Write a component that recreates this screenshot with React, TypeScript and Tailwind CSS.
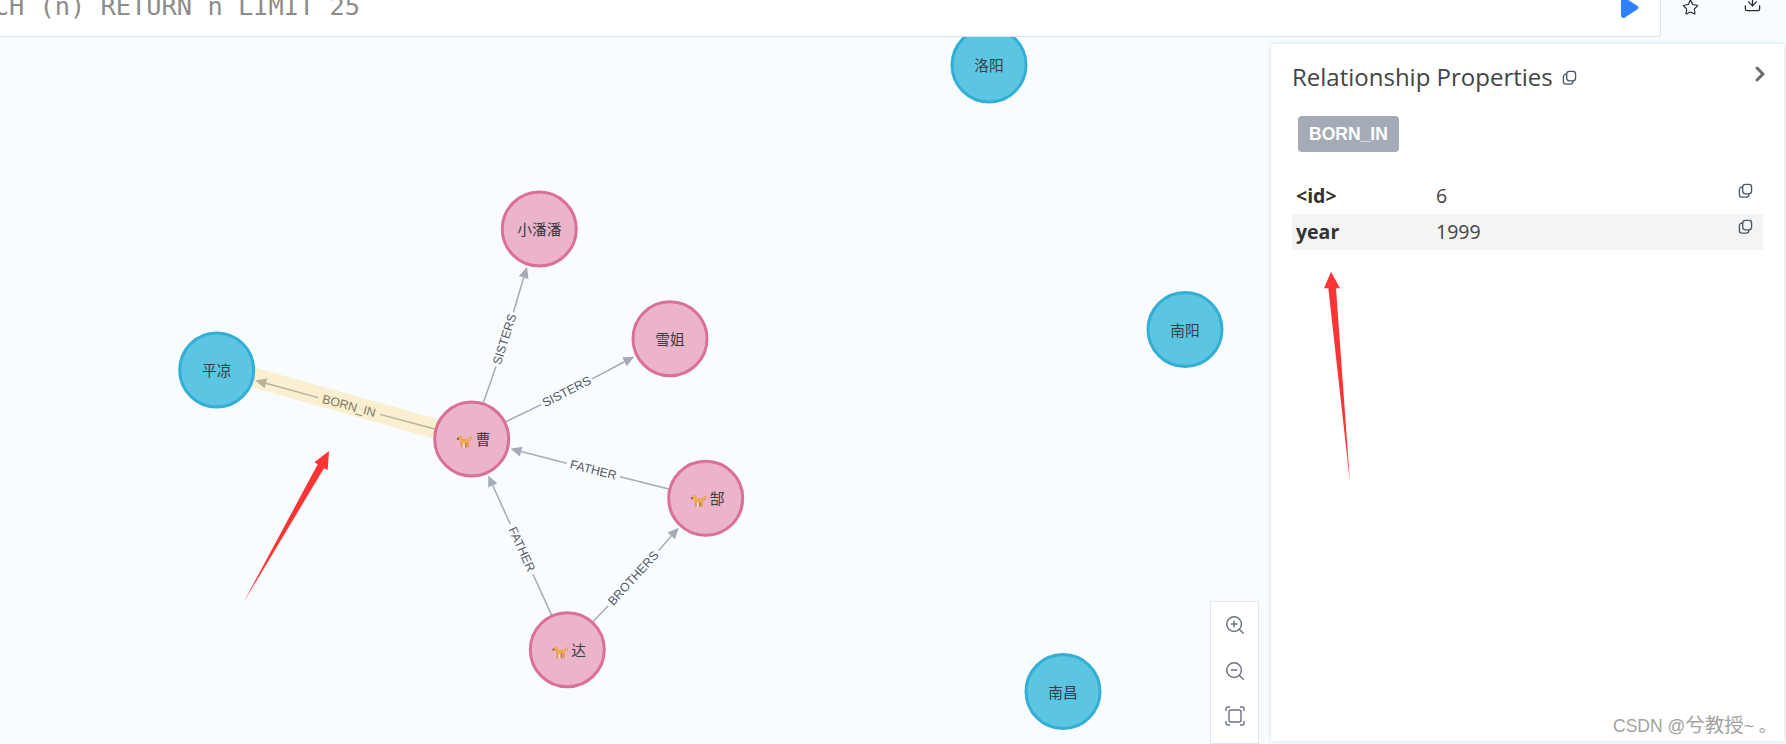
import { Download, Star, ChevronRight, ZoomIn, ZoomOut } from "lucide-react";

type GraphNode = { id: string; x: number; y: number; kind: "pink" | "blue"; text: string; dog?: boolean };

const nodes: GraphNode[] = [
  { id: "cao", x: 471.7, y: 439, kind: "pink", text: "曹", dog: true },
  { id: "pingliang", x: 216.7, y: 370, kind: "blue", text: "平凉" },
  { id: "xiaopan", x: 539.3, y: 229, kind: "pink", text: "小潘潘" },
  { id: "xuejie", x: 670, y: 338.7, kind: "pink", text: "雪姐" },
  { id: "gao", x: 705.7, y: 498.3, kind: "pink", text: "郜", dog: true },
  { id: "da", x: 567.3, y: 649.7, kind: "pink", text: "达", dog: true },
  { id: "luoyang", x: 989, y: 65, kind: "blue", text: "洛阳" },
  { id: "nanyang", x: 1185, y: 329.5, kind: "blue", text: "南阳" },
  { id: "nanchang", x: 1063, y: 691.5, kind: "blue", text: "南昌" },
];

const edges = [
  { from: "cao", to: "xiaopan", label: "SISTERS", lx: 504.7, ly: 339.3, gap: 57 },
  { from: "cao", to: "xuejie", label: "SISTERS", lx: 566.7, ly: 391.7, gap: 57 },
  { from: "cao", to: "pingliang", label: "BORN_IN", lx: 349, ly: 406, gap: 64, selected: true },
  { from: "gao", to: "cao", label: "FATHER", lx: 593.3, ly: 470, gap: 55 },
  { from: "da", to: "cao", label: "FATHER", lx: 521.7, ly: 549.3, gap: 55 },
  { from: "da", to: "gao", label: "BROTHERS", lx: 633.3, ly: 578.3, gap: 75 },
];

function find(id: string) {
  return nodes.find((n) => n.id === id)!;
}

function Edge({ from, to, label, lx, ly, gap, selected }: (typeof edges)[number] & { selected?: boolean }) {
  const a = find(from);
  const b = find(to);
  const len = Math.hypot(b.x - a.x, b.y - a.y);
  const ux = (b.x - a.x) / len;
  const uy = (b.y - a.y) / len;
  const sx = a.x + ux * 38;
  const sy = a.y + uy * 38;
  const tx = b.x - ux * 40;
  const ty = b.y - uy * 40;
  const bx = tx - ux * 11;
  const by = ty - uy * 11;
  const px = -uy * 5;
  const py = ux * 5;
  let angle = (Math.atan2(uy, ux) * 180) / Math.PI;
  if (angle > 90) angle -= 180;
  if (angle < -90) angle += 180;
  const color = selected ? "#b8b29c" : "#a5abb6";

  return (
    <g>
      <line x1={sx} y1={sy} x2={lx - (ux * gap) / 2} y2={ly - (uy * gap) / 2} stroke={color} strokeWidth={1.5} />
      <line x1={lx + (ux * gap) / 2} y1={ly + (uy * gap) / 2} x2={bx} y2={by} stroke={color} strokeWidth={1.5} />
      <polygon points={`${tx},${ty} ${bx + px},${by + py} ${bx - px},${by - py}`} fill={color} />
      <text
        x={lx}
        y={ly}
        textAnchor="middle"
        dominantBaseline="central"
        transform={`rotate(${angle} ${lx} ${ly})`}
        className={`font-['Liberation_Sans',sans-serif] text-[12.3px] ${selected ? "fill-[#7d7660]" : "fill-[#55585f]"}`}
      >
        {label}
      </text>
    </g>
  );
}

// orange dog in front of the person names
function Dog({ x, y }: { x: number; y: number }) {
  return (
    <g transform={`translate(${x} ${y})`}>
      <path d="M11.500 4.500c1.200 0 1.500-2.500 2.700-2.500 1 0 1.300 1.700.3 2.700-.6.6-1.500 1-2.500 1.300" fill="none" stroke="#e8a04f" strokeWidth={1.100} />
      <circle cx={3.600} cy={3.200} r={2.400} fill="#eda858" />
      <rect x={3.500} y={3.800} width={9} height={5} rx={2} fill="#eda858" />
      <rect x={4} y={8} width={1.800} height={4.500} fill="#e39a4a" />
      <rect x={6.500} y={8} width={1.500} height={4.500} fill="#fbe3c2" />
      <rect x={8.500} y={8} width={1.500} height={4.500} fill="#b9722f" />
      <rect x={10.600} y={8} width={1.800} height={4.500} fill="#e39a4a" />
      <path d="M0 3.200 2 2.600 2.300 4.600 .4 4.900z" fill="#8a5a2c" />
    </g>
  );
}

function Node({ node }: { node: GraphNode }) {
  const pink = node.kind === "pink";
  return (
    <g>
      <circle cx={node.x} cy={node.y} r={37} fill={pink ? "#ebb4ca" : "#5cc5e2"} stroke={pink ? "#da6f97" : "#33afd6"} strokeWidth={3} />
      {node.dog && <Dog x={node.x - 15} y={node.y - 4} />}
      <text
        x={node.dog ? node.x + 4 : node.x}
        y={node.y + 6}
        textAnchor={node.dog ? "start" : "middle"}
        className="font-['Liberation_Sans','Noto_Sans_CJK_SC',sans-serif] text-[14.7px] fill-[#3a3c44]"
      >
        {node.text}
      </text>
    </g>
  );
}

function CopyIcon({ className }: { className?: string }) {
  return (
    <svg viewBox="0 0 16 16" fill="none" stroke="#4b5563" strokeWidth={1.4} className={className}>
      <rect x="5" y="1.500" width="9.500" height="10" rx="3" />
      <path d="M5 4.500H4a2.500 2.500 0 0 0-2.500 2.500v5.500A2.500 2.500 0 0 0 4 15h5a2.500 2.500 0 0 0 2.500-2.500v-1" />
    </svg>
  );
}

function PropRow({ name, value, shaded }: { name: string; value: string; shaded?: boolean }) {
  return (
    <div className={`flex h-[36px] pl-[4px] pr-[10px] ${shaded ? "bg-[#f4f4f4]" : ""}`}>
      <div className="w-[140px] font-bold text-[19.5px] leading-[36px] text-[#333]">{name}</div>
      <div className="flex-1 text-[19.5px] leading-[36px] text-[#444]">{value}</div>
      <CopyIcon className="w-[15px] h-[15px] mt-[5px]" />
    </div>
  );
}

export default function App() {
  return (
    <div className="relative w-[1786px] h-[744px] flex flex-col overflow-hidden bg-[#f8fcff] font-['Open_Sans',sans-serif]">
      {/* editor bar, cut off at the top of the shot */}
      <div className="h-[37px] flex shrink-0">
        <div className="flex-1 flex justify-between overflow-hidden bg-white border-b border-r border-[#d7e5f0] rounded-br-[3px]">
          <div className="-ml-[52px] -mt-[9px] font-['DejaVu_Sans_Mono',monospace] text-[25.350px] leading-[30px] whitespace-nowrap text-[#8c8c8c]">
            MATCH (n) RETURN n LIMIT 25
          </div>
          <svg viewBox="0 0 18 22" className="w-[18px] h-[22px] -mt-[3px] mr-[21px]">
            <path d="M0 2.500C0 .5 2-.5 3.500.5l13 8.500c1.300.9 1.300 2.300 0 3.200l-13 8.500C2 21.500 0 20.500 0 18.500z" fill="#2f80fb" />
          </svg>
        </div>
        <div className="w-[125px] flex">
          <Star size={17} strokeWidth={1.6} className="ml-[21px] -mt-[1px] text-[#1f2937]" />
          <Download size={19} strokeWidth={1.6} className="ml-[44px] -mt-[6px] text-[#1f2937]" />
        </div>
      </div>

      <div className="flex-1 flex min-h-0">
        <div className="relative w-[1271px] overflow-hidden">
          <svg viewBox="0 37 1271 707" className="absolute inset-0 w-[1271px] h-[707px]">
            <line x1={216.7} y1={367} x2={471.7} y2={439} stroke="#faefd0" strokeWidth={20} />
            {edges.map((e) => (
              <Edge key={e.from + e.to} {...e} />
            ))}
            {nodes.map((n) => (
              <Node key={n.id} node={n} />
            ))}
          </svg>

          <div className="absolute left-[1210px] top-[564px] w-[49px] h-[143px] flex flex-col items-center gap-[24px] pt-[12px] bg-white border border-[#dfe6f1] text-[#6b7280]">
            <ZoomIn size={22} strokeWidth={1.6} />
            <ZoomOut size={22} strokeWidth={1.6} />
            <svg viewBox="0 0 20 20" fill="none" stroke="currentColor" strokeWidth={1.4} className="w-[20px] h-[20px]">
              <rect x="4" y="4" width="12" height="12" rx="2" />
              <path d="M1 5V3a2 2 0 0 1 2-2h2M15 1h2a2 2 0 0 1 2 2v2M19 15v2a2 2 0 0 1-2 2h-2M5 19H3a2 2 0 0 1-2-2v-2" />
            </svg>
          </div>
        </div>

        <div className="w-[513px] mt-[7px] mb-[3px] pl-[21px] pr-[21px] bg-white shadow-[0_0_4px_rgba(190,205,220,0.7)]">
          <div className="flex justify-between pt-[17px]">
            <div className="flex items-center text-[24px] leading-[32px] text-[#444]">
              Relationship Properties
              <CopyIcon className="w-[15px] h-[15px] ml-[9px]" />
            </div>
            <ChevronRight size={24} strokeWidth={3} className="mt-px -mr-[9px] text-[#6b6b6b]" />
          </div>
          <div className="mt-[23px] ml-[6px] w-[101px] h-[36px] rounded-[4px] bg-[#a5abb6] text-white font-bold font-['Liberation_Sans',sans-serif] text-[17.500px] leading-[36px] text-center">
            BORN_IN
          </div>
          <div className="mt-[26px]">
            <PropRow name="<id>" value="6" />
            <PropRow name="year" value="1999" shaded />
          </div>
        </div>
      </div>

      {/* annotations pasted over the shot */}
      <svg viewBox="0 0 1786 744" className="absolute inset-0 w-[1786px] h-[744px] pointer-events-none">
        <polygon points="243.300,602.700 317.700,464.300 314.300,462.300 329,451 327.700,470 324,468.300" fill="#ff3535" />
        <polygon points="1350,482.700 1328.300,288.300 1324,288.300 1331,271.700 1340,288.300 1336,288.300" fill="#ff3535" />
      </svg>
      <div className="absolute left-[1613px] top-[712px] font-['Liberation_Sans','Noto_Sans_CJK_SC',sans-serif] text-[17.500px] leading-[26px] text-[#a3a3a3] whitespace-nowrap">
        CSDN @<span className="text-[19.500px]">兮教授</span>~ 。
      </div>
    </div>
  );
}
